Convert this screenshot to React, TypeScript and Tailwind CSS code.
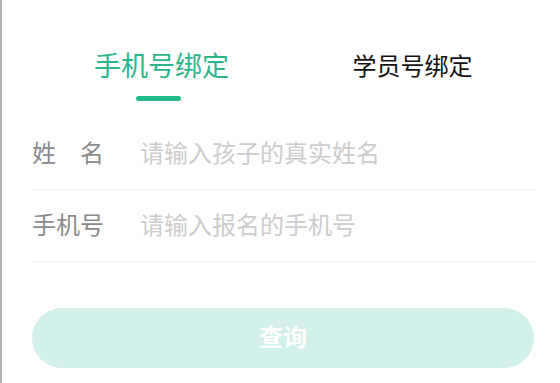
import { useState } from "react";

const FONT = "font-['Liberation_Sans','Noto_Sans_CJK_SC',sans-serif]";

export default function App() {
  const [tab, setTab] = useState(0);
  const [name, setName] = useState("");
  const [phone, setPhone] = useState("");

  const tabs = ["手机号绑定", "学员号绑定"];

  return (
    <div className={`w-[560px] h-[383px] bg-white border-l-2 border-[#b4b4b4] overflow-hidden ${FONT}`}>
      {/* 标签 */}
      <div className="flex ml-[34px] w-[502px] pt-[50px]">
        {tabs.map((t, i) => (
          <button key={t} onClick={() => setTab(i)} className="flex-1 flex flex-col items-center">
            <span
              className={
                i === tab
                  ? "text-[27px] leading-[34px] text-[#2db58a]"
                  : "text-[24px] leading-[34px] text-[#111]"
              }
            >
              {t}
            </span>
            {i === tab && <span className="mt-[12px] mr-[6px] w-[45px] h-[5px] rounded-full bg-[#1fb98c]" />}
          </button>
        ))}
      </div>

      {/* 表单 */}
      <div className="ml-[30px] w-[502px] mt-[17px]">
        <div className="flex items-center h-[72px] border-b border-[#eeeeee]">
          <label className="w-[108px] text-[24px] text-[#8a8a8a]">姓　名</label>
          <input
            value={name}
            onChange={(e) => setName(e.target.value)}
            placeholder="请输入孩子的真实姓名"
            className="flex-1 text-[24px] outline-none placeholder:text-[#cccccc] text-[#333]"
          />
        </div>
        <div className="flex items-center h-[72px] border-b border-[#eeeeee]">
          <label className="w-[108px] text-[24px] text-[#8a8a8a]">手机号</label>
          <input
            value={phone}
            onChange={(e) => setPhone(e.target.value)}
            placeholder="请输入报名的手机号"
            className="flex-1 text-[24px] outline-none placeholder:text-[#cccccc] text-[#333]"
          />
        </div>
        <button className="mt-[46px] w-full h-[60px] rounded-full bg-[#d3f0ea] text-white text-[24px] font-bold">
          查询
        </button>
      </div>
    </div>
  );
}
